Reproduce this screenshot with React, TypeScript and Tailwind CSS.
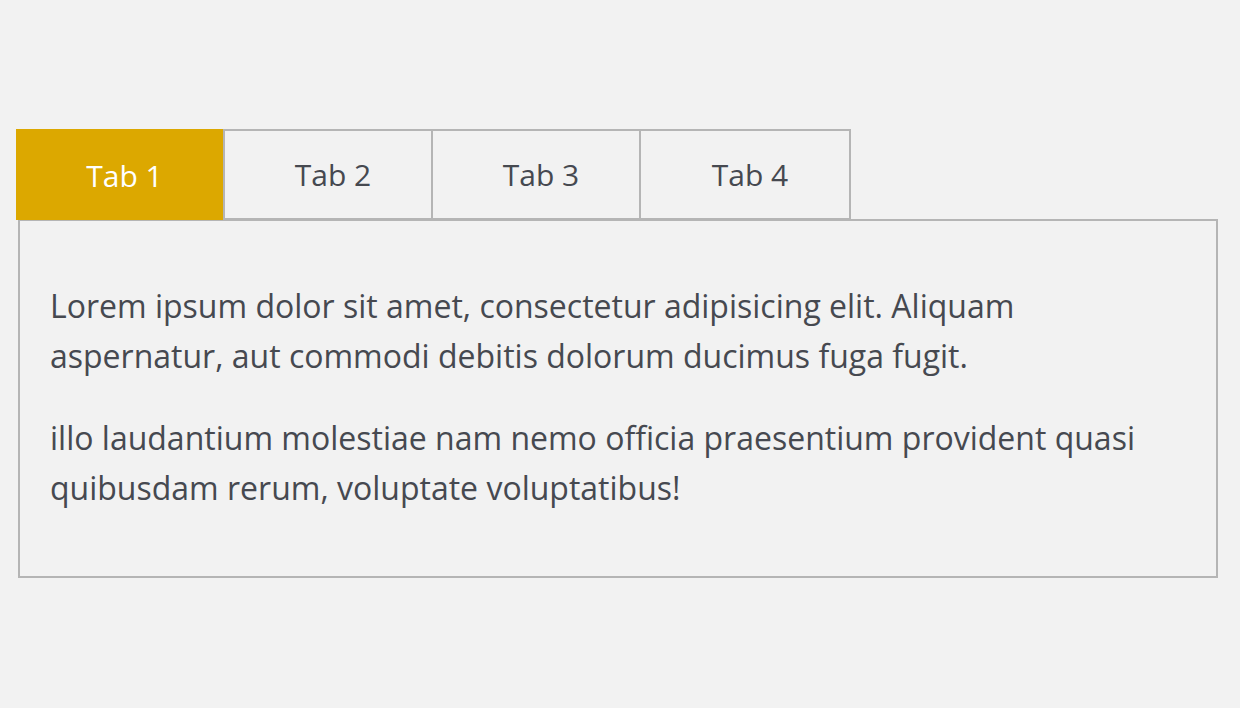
import React from "react";

export default function App() {
  const tabs = ["Tab 1", "Tab 2", "Tab 3", "Tab 4"];
  return (
    <div className="w-[1240px] h-[708px] bg-[#f2f2f2] pt-[129px] pl-[16px]" style={{ fontFamily: '"Open Sans", sans-serif' }}>
      <div className="flex h-[91px]">
        {tabs.map((t, i) =>
          i === 0 ? (
            <div key={t} className="w-[209px] h-[91px] bg-[#dca800] text-white flex items-center justify-center pl-[8px] pt-[2px] text-[30px]">
              {t}
            </div>
          ) : (
            <div
              key={t}
              className={`h-[91px] border-2 border-[#b5b5b5] text-[#464950] flex items-center justify-center pl-[10px] text-[30px] -ml-[2px] ${i === 3 ? "w-[212px]" : "w-[210px]"}`}
            >
              {t}
            </div>
          )
        )}
      </div>
      <div className="ml-[2px] -mt-[1px] w-[1200px] h-[359px] border-2 border-[#b5b5b5] px-[30px] pt-[60px] text-[32px] leading-[50px] text-[#464950]">
        <p>Lorem ipsum dolor sit amet, consectetur adipisicing elit. Aliquam aspernatur, aut commodi debitis dolorum ducimus fuga fugit.</p>
        <p className="mt-[32px]">illo laudantium molestiae nam nemo officia praesentium provident quasi quibusdam rerum, voluptate voluptatibus!</p>
      </div>
    </div>
  );
}
